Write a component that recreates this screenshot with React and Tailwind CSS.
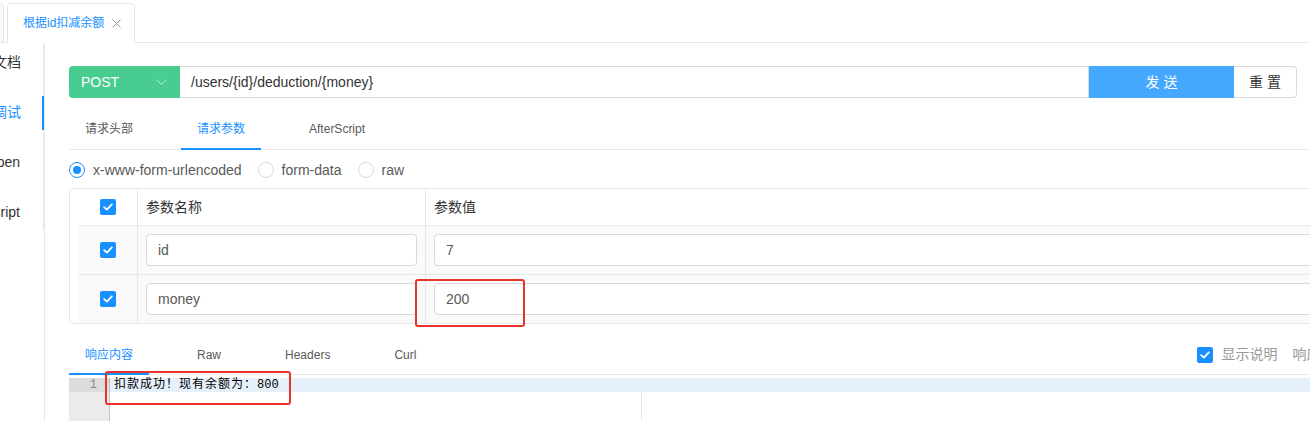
import React from "react";

const FONT = { fontFamily: '"Liberation Sans", "Noto Sans CJK SC", sans-serif' };
const MONO = { fontFamily: '"Liberation Mono", "Noto Sans CJK SC", monospace' };

function Check() {
  return (
    <div className="w-[16px] h-[16px] rounded-[2px] bg-[#1890ff] flex items-center justify-center shrink-0">
      <svg width="10" height="8" viewBox="0 0 10 8" fill="none">
        <path d="M1.2 4.2 L3.9 6.6 L8.8 1.4" stroke="white" strokeWidth="1.8" strokeLinecap="round" strokeLinejoin="round" />
      </svg>
    </div>
  );
}

function Radio({ on, label }) {
  return (
    <div className="flex items-center gap-[8px] shrink-0">
      <div
        className={
          "w-[16px] h-[16px] rounded-full border bg-white flex items-center justify-center " +
          (on ? "border-[#1890ff]" : "border-[#d9d9d9]")
        }
      >
        {on && <div className="w-[8px] h-[8px] rounded-full bg-[#1890ff]" />}
      </div>
      <span className="text-[14px] text-[#595959]">{label}</span>
    </div>
  );
}

function Tab({ label, active }) {
  return (
    <div className={"relative h-full shrink-0 whitespace-nowrap flex items-center px-[16px] text-[12px] " + (active ? "text-[#1890ff]" : "text-[#595959]")}>
      {label}
      {active && <div className="absolute left-0 right-0 bottom-[-1px] h-[2px] bg-[#1890ff]" />}
    </div>
  );
}

function Row({ name, value }) {
  return (
    <div className="ml-[8px] bg-[#fafafa] border-t border-[#e8e8e8] flex h-[49px]">
      <div className="w-[60px] border-r border-[#e8e8e8] flex items-center justify-center">
        <Check />
      </div>
      <div className="w-[288px] border-r border-[#e8e8e8] p-[8px]">
        <div className="h-[32px] bg-white border border-[#d9d9d9] rounded-[4px] flex items-center pl-[11px] text-[14px] text-[#595959]">
          {name}
        </div>
      </div>
      <div className="flex-1 p-[8px]">
        <div className="h-[32px] bg-white border border-[#d9d9d9] rounded-[4px] flex items-center pl-[11px] text-[14px] text-[#595959]">
          {value}
        </div>
      </div>
    </div>
  );
}

export default function App() {
  return (
    <div className="w-[1310px] h-[421px] overflow-hidden bg-white relative" style={FONT}>
      {/* top tab bar */}
      <div className="h-[43px] flex items-end border-b border-[#e8e8e8]">
        <div className="w-[4px] h-[39px] bg-[#fafafa] border-r border-t border-[#e8e8e8] rounded-tr-[4px]" />
        <div className="ml-[3px] w-[128px] h-[40px] -mb-px bg-white border border-[#e8e8e8] border-b-white rounded-t-[4px] flex items-center pl-[15px] text-[12px] text-[#1890ff] whitespace-nowrap">
          根据id扣减余额
          <svg className="ml-[8px]" width="9" height="9" viewBox="0 0 9 9">
            <path d="M0.5 0.5 L8.5 8.5 M8.5 0.5 L0.5 8.5" stroke="#999" strokeWidth="1" />
          </svg>
        </div>
      </div>

      <div className="flex">
        {/* sidebar */}
        <div className="w-[44px] shrink-0 pt-[2px]">
          <div className="border-r border-[#e8e8e8] flex flex-col gap-[16px] pb-[1px] relative">
            <div className="h-[34px] flex items-center justify-end pr-[22px] text-[14px] text-[#333] whitespace-nowrap">文档</div>
            <div className="h-[34px] flex items-center justify-end pr-[22px] text-[14px] text-[#1890ff] whitespace-nowrap relative">
              调试
              <div className="absolute right-[-1px] top-[1px] w-[2px] h-[34px] bg-[#1890ff]" />
            </div>
            <div className="h-[34px] flex items-center justify-end pr-[23px] text-[14px] text-[#333] whitespace-nowrap">Open</div>
            <div className="h-[34px] flex items-center justify-end pr-[23px] text-[14px] text-[#333] whitespace-nowrap">Script</div>
          </div>
        </div>

        {/* content */}
        <div className="flex-1 min-w-0 border-l border-[#e8e8e8] pl-[24px] pt-[23px] min-h-[380px]">
          {/* url row */}
          <div className="flex h-[32px] w-[1228px]">
            <div className="w-[111px] bg-[#49cc90] rounded-l-[4px] flex items-center justify-between pl-[12px] pr-[13px] text-[14px] text-white">
              POST
              <svg width="11" height="6" viewBox="0 0 11 6" fill="none">
                <path d="M0.5 0.5 L5.5 5.5 L10.5 0.5" stroke="rgba(255,255,255,0.6)" strokeWidth="1" />
              </svg>
            </div>
            <div className="flex-1 border border-l-0 border-[#d9d9d9] flex items-center pl-[11px] text-[14px] text-[#333]">
              /users/{"{id}"}/deduction/{"{money}"}
            </div>
            <div className="w-[145px] bg-[#45a8ff] flex items-center justify-center text-[14px] text-white tracking-[4px] pl-[4px]">
              发送
            </div>
            <div className="w-[63px] border border-l-0 border-[#d9d9d9] rounded-r-[4px] flex items-center justify-center text-[14px] text-[#333] tracking-[4px] pl-[4px]">
              重置
            </div>
          </div>

          {/* request tabs */}
          <div className="mt-[11px] h-[41px] flex gap-[32px] border-b border-[#e8e8e8]">
            <Tab label="请求头部" />
            <Tab label="请求参数" active />
            <Tab label="AfterScript" />
          </div>

          {/* radios */}
          <div className="mt-[10px] h-[20px] flex items-center gap-[16px]">
            <Radio on label="x-www-form-urlencoded" />
            <Radio label="form-data" />
            <Radio label="raw" />
          </div>

          {/* table */}
          <div className="mt-[8px] w-[1262px] border border-[#e8e8e8] rounded-[4px]">
            <div className="h-[36px] flex pl-[8px]">
              <div className="w-[60px] border-r border-[#e8e8e8] flex items-center justify-center">
                <Check />
              </div>
              <div className="w-[288px] border-r border-[#e8e8e8] flex items-center pl-[8px] text-[14px] text-[#333]">
                参数名称
              </div>
              <div className="flex-1 flex items-center pl-[8px] text-[14px] text-[#333]">参数值</div>
            </div>
            <Row name="id" value="7" />
            <Row name="money" value="200" />
          </div>

          {/* response tabs */}
          <div className="mt-[11px] h-[40px] flex items-stretch border-b border-[#e8e8e8]">
            <div className="flex gap-[32px] shrink-0">
              <Tab label="响应内容" active />
              <Tab label="Raw" />
              <Tab label="Headers" />
              <Tab label="Curl" />
            </div>
            <div className="ml-[765px] shrink-0 flex items-center gap-[8px] whitespace-nowrap">
              <Check />
              <span className="text-[14px] text-[#999]">显示说明</span>
              <span className="ml-[7px] text-[14px] text-[#999]">响应内容类型</span>
            </div>
          </div>

          {/* editor */}
          <div className="mt-[3px] flex h-[60px]">
            <div className="w-[41px] shrink-0 bg-[#ebebeb] border-r border-[#c4c4c4]">
              <div className="h-[14px] bg-[#dcdcdc] flex items-center justify-end pr-[12px] text-[12px] text-[#888]" style={MONO}>
                1
              </div>
            </div>
            <div className="flex-1 flex flex-col">
              <div className="h-[14px] bg-[#e6f0fb] flex items-center pl-[4px] text-[12px] text-black whitespace-nowrap" style={MONO}>
                <span className="tracking-[1px]">扣款成功！现有余额为：</span>
                <span>800</span>
              </div>
              <div className="flex-1 w-[532px] border-r border-[#e8e8e8]" />
            </div>
          </div>
        </div>
      </div>

      {/* annotation boxes */}
      <div className="absolute left-[415px] top-[279px] w-[110px] h-[48px] border-2 border-[#e8332b] rounded-[3px]" />
      <div className="absolute left-[105px] top-[371px] w-[186px] h-[34px] border-2 border-[#e8332b] rounded-[3px]" />
    </div>
  );
}
